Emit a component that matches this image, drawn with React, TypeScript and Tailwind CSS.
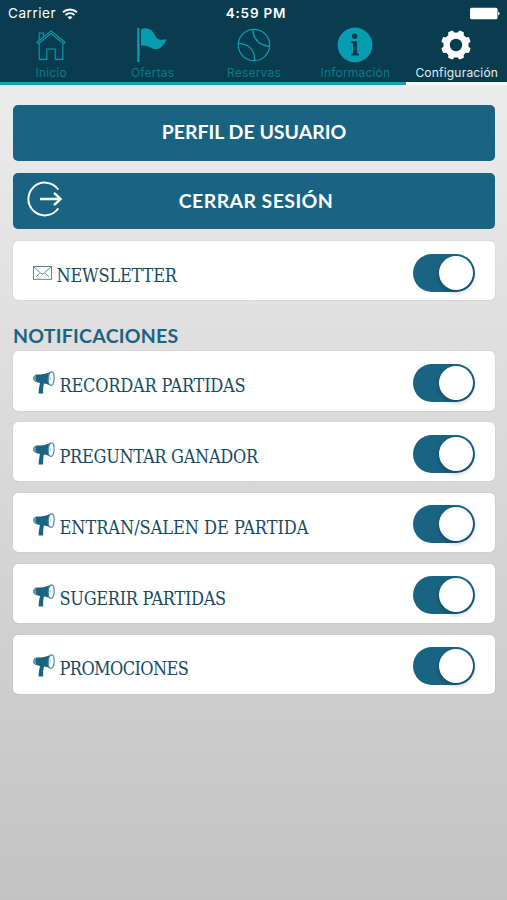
import type { ReactNode } from "react";

interface Tab {
  label: string;
  icon: ReactNode;
  active?: boolean;
}

interface SettingRowProps {
  label: string;
  icon: ReactNode;
  labelClass: string;
}

function HomeIcon() {
  return (
    <svg width="30" height="30" viewBox="0 0 30 30" fill="none" stroke="currentColor" strokeWidth="1.1">
      <path d="M1 12.2 15 .9l14 11.3-1.3 1.6L15 3.5 2.3 13.8z" />
      <path d="M3.2 13.2v16.2h7.6V19h8.4v10.4h7.6V13.2" />
      <path d="M3.2 10.2V3h4.4v3.6" />
    </svg>
  );
}

function FlagIcon() {
  return (
    <svg width="32" height="34" viewBox="0 0 32 34" fill="currentColor" className="mr-px">
      <path d="M1.2 0h2.3v34H1.2z" />
      <path d="M5 1.5C9-.5 14 0 17 4c2 3 3 6.500 6 7.500 2.500.8 5 0 7.500-.2-1.500 3.500-4.500 9.700-10 9.900-6 .2-8-5-15.500-3.400z" />
    </svg>
  );
}

function BallIcon() {
  return (
    <svg width="34" height="34" viewBox="0 0 34 34" fill="none" stroke="currentColor" strokeWidth="1.3">
      <circle cx="17" cy="17" r="15.700" />
      <path d="M15.800 1.400c.4 9.600 6.600 15.600 16.700 17.200M1.500 15.400C12 16 18.300 22.200 17.600 32.700" />
    </svg>
  );
}

function InfoIcon() {
  return (
    <svg width="36" height="36" viewBox="0 0 36 36">
      <circle cx="18" cy="18" r="17.400" fill="currentColor" />
      <circle cx="17.700" cy="9.200" r="2.700" fill="#083c4e" />
      <path d="M14.300 14.200h5.800v12l1.700.8v1.400h-7.600V27l1.800-.8v-9.800l-1.700-.7z" fill="#083c4e" />
    </svg>
  );
}

function GearIcon() {
  return (
    <svg width="30" height="30" viewBox="0 0 30 30" className="mr-px">
      <g fill="currentColor">
        <circle cx="15" cy="15" r="12.500" />
        <path id="tooth" d="M11.500 4 12.500.3q2.500-.6 5 0L18.500 4v22l-1 3.700q-2.500.6-5 0l-1-3.700z" transform="rotate(22.500 15 15)" />
        <use href="#tooth" transform="rotate(45 15 15)" />
        <use href="#tooth" transform="rotate(90 15 15)" />
        <use href="#tooth" transform="rotate(135 15 15)" />
      </g>
      <circle cx="15" cy="15" r="6.200" fill="#083c4e" />
    </svg>
  );
}

function WifiIcon() {
  return (
    <svg width="16" height="12" viewBox="0 0 16 12" fill="none" stroke="currentColor" strokeWidth="1.900">
      <path d="M1 4.300c4-3.800 10-3.800 14 0M3.500 7c2.600-2.400 6.400-2.400 9 0" />
      <path d="M5.500 9.100c1.500-1.300 3.500-1.300 5 0L8 11.600z" fill="currentColor" stroke="none" />
    </svg>
  );
}

function BatteryIcon() {
  return (
    <svg width="31" height="13" viewBox="0 0 31 13" fill="currentColor">
      <rect x="1" y=".7" width="27.500" height="11.600" rx="1.500" />
      <path d="M29.100 4.500q1.500.4 1.500 2t-1.500 2z" />
    </svg>
  );
}

function LogoutIcon() {
  return (
    <svg width="36" height="36" viewBox="0 0 36 36" fill="none" stroke="currentColor" strokeWidth="2">
      <path d="M30.800 8A16.400 16.400 0 1 0 30.800 28" strokeLinecap="round" />
      <path d="M13 18h20M27 11.800l6.600 6.200-6.600 6.200" strokeWidth="2.400" />
    </svg>
  );
}

function EnvelopeIcon() {
  return (
    <svg width="19" height="14" viewBox="0 0 19 14" fill="none" stroke="#3f7f98" strokeWidth=".9">
      <rect x=".5" y=".5" width="18" height="12.800" />
      <path d="m1 1 6.700 6.200q1.800 1.500 3.600 0L18 1M3 10.800l3.800-3.400M16 10.800l-3.800-3.400" />
    </svg>
  );
}

function MegaphoneIcon() {
  return (
    <svg width="22" height="23" viewBox="0 0 22 23">
      <path d="M3.700 4C1.500 4 .5 5.800.6 7.600c.1 2 1.300 3.200 3.300 3.200" fill="#7faabd" stroke="#1a6483" strokeWidth=".8" />
      <path d="M3.500 3.500C9 3.500 13.500 2.800 18 .7l-.5 13.800c-2.300-1-4.300-1.700-6.500-1.900-.8 2.500-1 6-.8 9.900H5.600c0-4 .8-7.500 1.400-10.500l-3-.7C2.200 9 2.200 5.800 3.500 3.500z" fill="#1a6483" />
      <ellipse cx="18.200" cy="7.600" rx="2.900" ry="6.700" fill="#fff" stroke="#4d87a0" strokeWidth="1.200" transform="rotate(3 18.200 7.600)" />
      <path d="M16.600 4.800q2 2.600.2 5.500z" fill="#8cb1c1" />
    </svg>
  );
}

const tabs: Tab[] = [
  { label: "Inicio", icon: <HomeIcon /> },
  { label: "Ofertas", icon: <FlagIcon /> },
  { label: "Reservas", icon: <BallIcon /> },
  { label: "Información", icon: <InfoIcon /> },
  { label: "Configuración", icon: <GearIcon />, active: true },
];

const notifications = [
  { label: "RECORDAR PARTIDAS", tracking: "tracking-[-0.22px]" },
  { label: "PREGUNTAR GANADOR", tracking: "tracking-[-0.3px]" },
  { label: "ENTRAN/SALEN DE PARTIDA", tracking: "tracking-[-0.03px]" },
  { label: "SUGERIR PARTIDAS", tracking: "tracking-[-0.3px]" },
  { label: "PROMOCIONES", tracking: "tracking-[-0.6px]" },
];

function StatusBar() {
  return (
    <div className="grid h-[27px] grid-cols-3 items-center pl-2 pr-[7px] text-[13.5px] leading-none text-white">
      <div className="flex items-center gap-[6px] pt-px">
        <span className="tracking-[0.55px]">Carrier</span>
        <WifiIcon />
      </div>
      <span className="pl-[4px] pt-px text-center font-semibold tracking-[0.8px]">4:59 PM</span>
      <div className="flex justify-end">
        <BatteryIcon />
      </div>
    </div>
  );
}

function TabBar() {
  return (
    <nav className="grid h-[58px] grid-cols-5">
      {tabs.map((tab) => (
        <button
          key={tab.label}
          className={`flex flex-col items-center border-b-[3px] pl-px ${
            tab.active ? "border-[#f4f7f7] text-white" : "border-[#16a0b3] text-[#079db1]"
          }`}
        >
          <span className="flex h-9 items-center">{tab.icon}</span>
          <span
            className={`mt-[2px] text-[12px] leading-[15px] tracking-[0.2px] ${
              tab.active ? "text-[#e3edf0]" : "text-[#087d8c]"
            }`}
          >
            {tab.label}
          </span>
        </button>
      ))}
    </nav>
  );
}

function Toggle() {
  return (
    <span className="flex h-[38px] w-[62.5px] items-center justify-end rounded-full bg-[#1a6483] pr-[2px]">
      <span className="size-[34px] rounded-full bg-white shadow-[0_2px_5px_rgba(0,0,0,0.3)]" />
    </span>
  );
}

function SettingRow({ label, icon, labelClass }: SettingRowProps) {
  return (
    <div className="flex h-[59.2px] items-center rounded-[5px] bg-white pl-[19.5px] pr-5 pt-[3.5px] shadow-[0_0_1px_rgba(0,0,0,0.25)]">
      {icon}
      <span
        className={`whitespace-nowrap pt-[7px] font-['DejaVu_Serif_Condensed','DejaVu_Serif',serif] text-[18px] leading-6 text-[#174b5e] ${labelClass}`}
      >
        {label}
      </span>
      <span className="ml-auto">
        <Toggle />
      </span>
    </div>
  );
}

export default function App() {
  return (
    <div className="flex h-[900px] w-[507px] flex-col overflow-hidden bg-linear-to-b from-[#f0f0f0] to-[#c3c3c3] font-['Inter',sans-serif]">
      <header className="bg-[#083c4e]">
        <StatusBar />
        <TabBar />
      </header>
      <main className="flex flex-col pl-[13px] pr-3 pt-5">
        <button className="flex h-14 items-center justify-center rounded-[5px] bg-[#1a6483] pb-[2px] font-['Lato',sans-serif] text-[19.5px] font-bold text-white">
          PERFIL DE USUARIO
        </button>
        <button className="mt-3 grid h-[56.3px] grid-cols-[60px_1fr_60px] items-center rounded-[5px] bg-[#1a6483] pb-px pl-[14px] pr-[10px] font-['Lato',sans-serif] text-[19.5px] font-bold tracking-[0.4px] text-white">
          <span className="pb-[3px]">
            <LogoutIcon />
          </span>
          <span>CERRAR SESIÓN</span>
        </button>
        <div className="mt-3">
          <SettingRow label="NEWSLETTER" icon={<EnvelopeIcon />} labelClass="ml-[5px] tracking-[-0.2px]" />
        </div>
        <h2 className="mt-[24px] h-[27px] font-['Lato',sans-serif] text-[19.5px] font-bold leading-6 tracking-[0.25px] text-[#1a6483]">
          NOTIFICACIONES
        </h2>
        <div className="flex flex-col gap-[11.6px]">
          {notifications.map(({ label, tracking }) => (
            <SettingRow key={label} label={label} icon={<MegaphoneIcon />} labelClass={`ml-[5px] ${tracking}`} />
          ))}
        </div>
      </main>
    </div>
  );
}
